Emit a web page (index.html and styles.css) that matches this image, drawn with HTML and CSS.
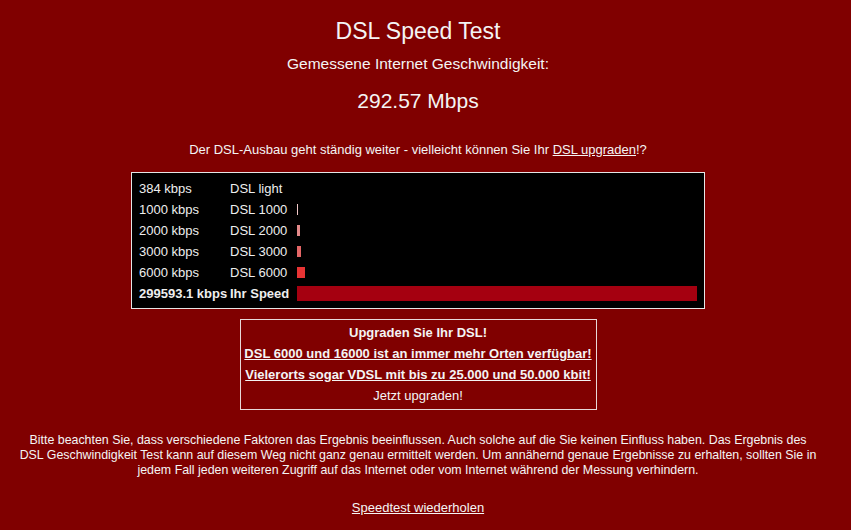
FILE: index.html
```html
<!DOCTYPE html>
<html lang="de">
<head>
    <meta charset="UTF-8">
    <meta name="viewport" content="width=device-width, initial-scale=1.0">
    <title>DSL Speed Test</title>
    <link rel="stylesheet" href="styles.css">
</head>
<body>
    <div class="page">
        <h1 class="title">DSL Speed Test</h1>
        <div class="subtitle">Gemessene Internet Geschwindigkeit:</div>
        <div class="speed">292.57 Mbps</div>

        <p class="info">Der DSL-Ausbau geht ständig weiter - vielleicht können Sie Ihr <a href="#">DSL upgraden</a>!?</p>

        <div class="results">
            <div class="row">
                <span>384 kbps</span><span>DSL light</span>
                <div class="bar-cell"></div>
            </div>
            <div class="row">
                <span>1000 kbps</span><span>DSL 1000</span>
                <div class="bar-cell"><div class="bar bar-1000" style="width: 1px"></div></div>
            </div>
            <div class="row">
                <span>2000 kbps</span><span>DSL 2000</span>
                <div class="bar-cell"><div class="bar bar-2000" style="width: 3px"></div></div>
            </div>
            <div class="row">
                <span>3000 kbps</span><span>DSL 3000</span>
                <div class="bar-cell"><div class="bar bar-3000" style="width: 4px"></div></div>
            </div>
            <div class="row">
                <span>6000 kbps</span><span>DSL 6000</span>
                <div class="bar-cell"><div class="bar bar-6000" style="width: 8px"></div></div>
            </div>
            <div class="row own">
                <span>299593.1 kbps</span><span>Ihr Speed</span>
                <div class="bar-cell"><div class="bar bar-own" style="width: 400px"></div></div>
            </div>
        </div>

        <div class="upgrade">
            <div class="upgrade-head">Upgraden Sie Ihr DSL!</div>
            <a href="#" class="upgrade-link">DSL 6000 und 16000 ist an immer mehr Orten verfügbar!</a>
            <a href="#" class="upgrade-link">Vielerorts sogar VDSL mit bis zu 25.000 und 50.000 kbit!</a>
            <div class="upgrade-foot">Jetzt upgraden!</div>
        </div>

        <p class="note">Bitte beachten Sie, dass verschiedene Faktoren das Ergebnis beeinflussen. Auch solche auf die Sie keinen Einfluss haben. Das Ergebnis des DSL Geschwindigkeit Test kann auf diesem Weg nicht ganz genau ermittelt werden. Um annähernd genaue Ergebnisse zu erhalten, sollten Sie in jedem Fall jeden weiteren Zugriff auf das Internet oder vom Internet während der Messung verhindern.</p>

        <p class="again"><a href="#">Speedtest wiederholen</a></p>
    </div>
</body>
</html>
```

FILE: styles.css
```css
body { margin: 0; padding: 0; background-color: #800000; color: #f4f4f4; font-family: "Liberation Sans", Arial, sans-serif; font-size: 13px; }
a { color: #f4f4f4; }
.page { width: 836px; display: flex; flex-direction: column; align-items: center; text-align: center; }
.title { font-size: 23px; font-weight: normal; line-height: 26px; margin: 18px 0 0 0; }
.subtitle { font-size: 15.5px; line-height: 20px; margin-top: 10px; }
.speed { font-size: 21px; line-height: 24px; margin-top: 15px; }
.info { line-height: 15px; margin: 29px 0 0 0; }

.results { margin-top: 15px; width: 558px; padding: 5px 7px 4px 7px; background-color: #000; border: 1px solid #e6e6e6; text-align: left; color: #eee; }
.row { display: grid; grid-template-columns: 91px 67px 400px; height: 21px; align-items: center; white-space: nowrap; }
.row.own { font-weight: bold; }
.bar-cell { display: flex; align-items: center; }
.bar { height: 11px; }
.bar-1000 { background-color: #f2c8c8; }
.bar-2000 { background-color: #e48a8a; }
.bar-3000 { background-color: #e46666; }
.bar-6000 { background-color: #e83434; }
.bar-own { height: 15px; background-color: #a50010; }

.upgrade { margin-top: 10px; width: 355px; padding: 3px 0 3px 0; border: 1px solid #e8d8d8; display: flex; flex-direction: column; gap: 1px; }
.upgrade > * { line-height: 20px; white-space: nowrap; }
.upgrade-head { font-weight: bold; }
.upgrade-link { font-weight: bold; }

.note { width: 800px; font-size: 12.4px; line-height: 15px; margin: 23px 0 0 0; }
.again { line-height: 15px; margin: 22px 0 0 0; }
```
